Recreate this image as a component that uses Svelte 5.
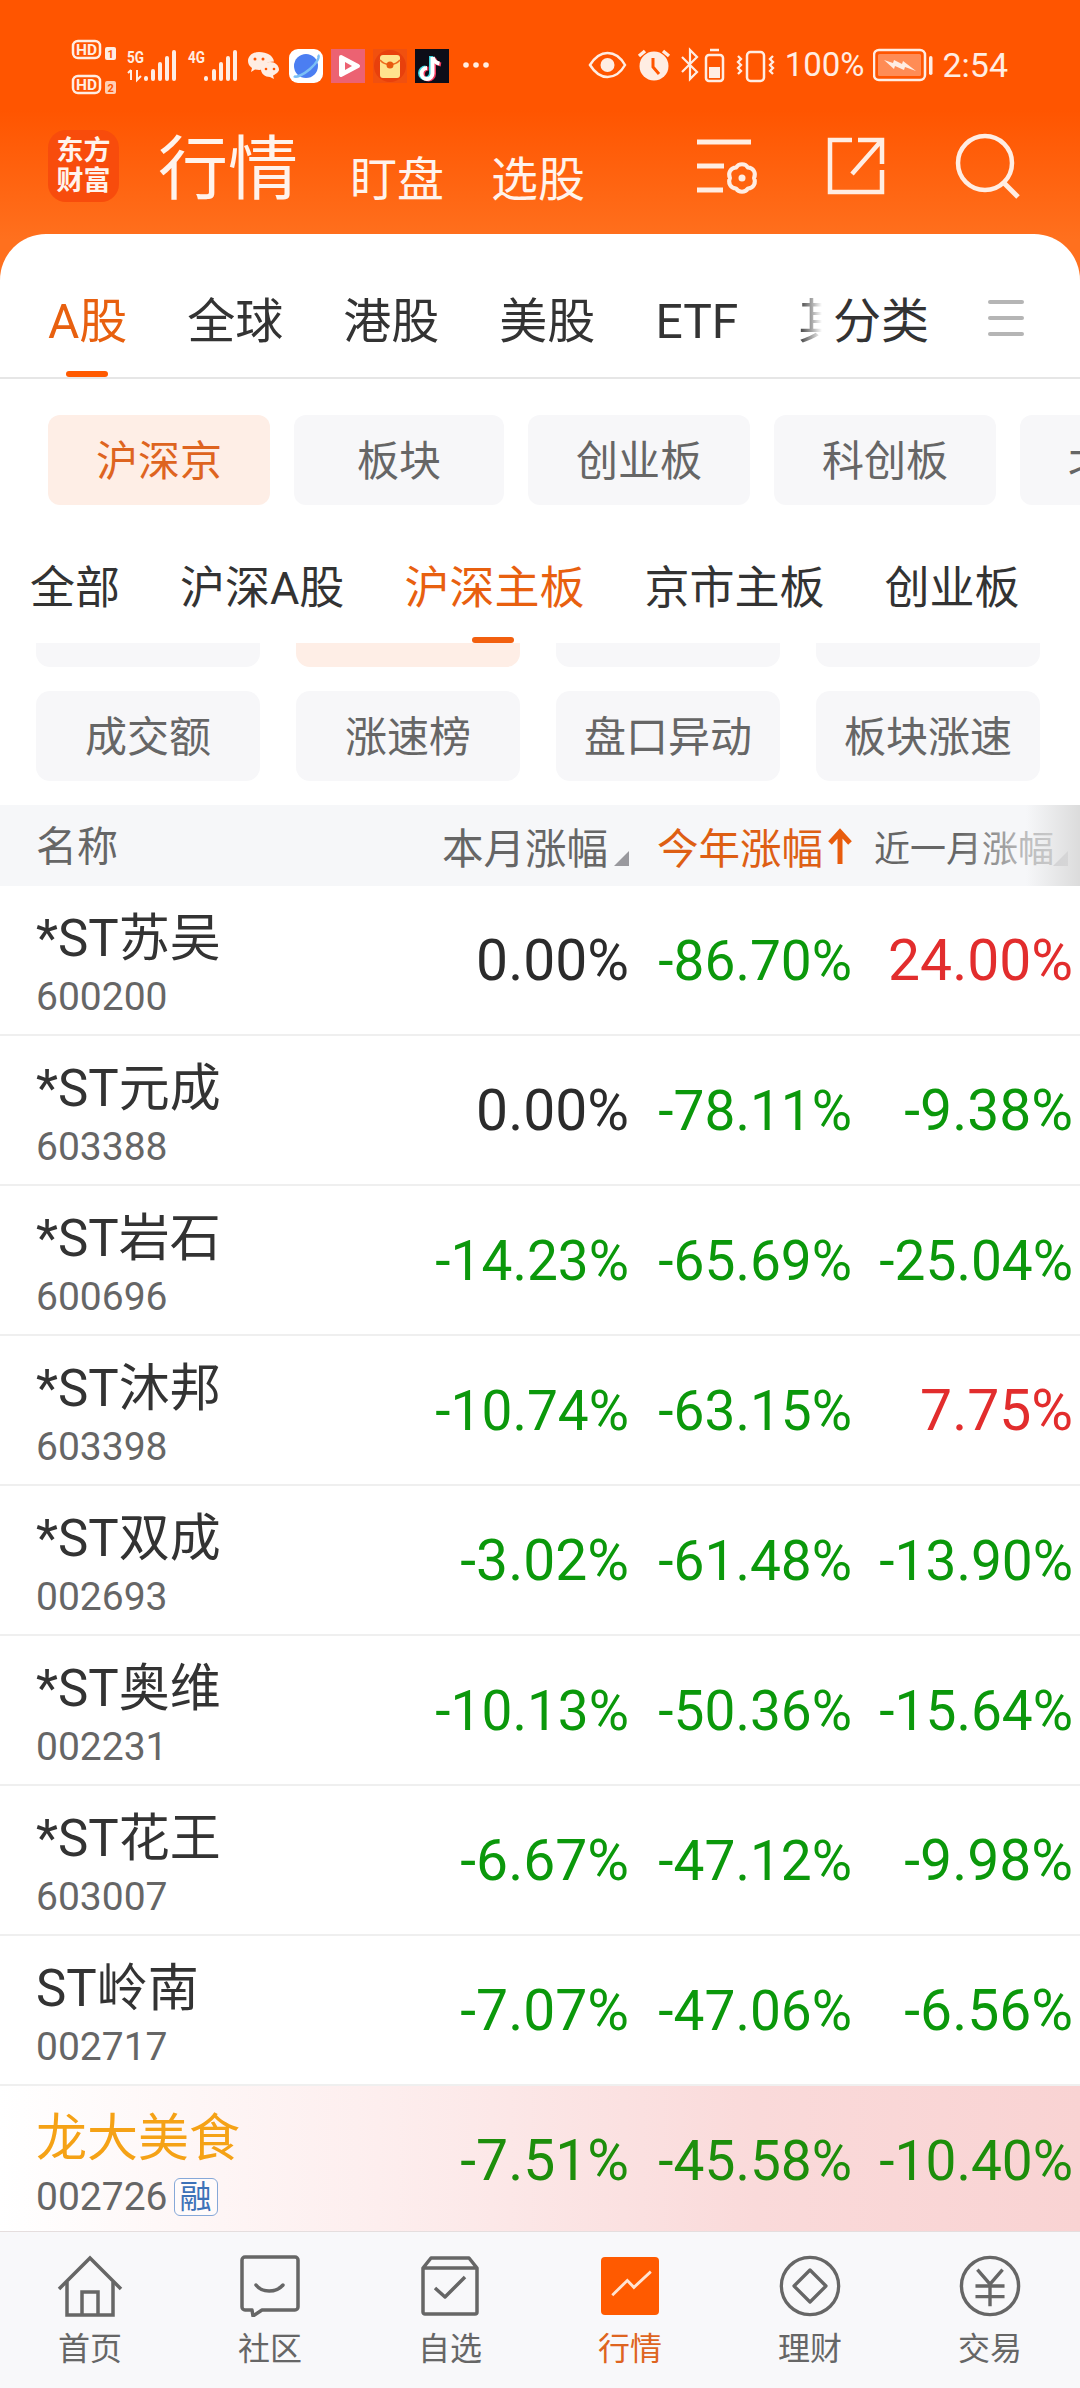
<script>
  const tabs = ['A股', '全球', '港股', '美股', 'ETF', '其他'];
  const chips = [['沪深京', true], ['板块'], ['创业板'], ['科创板'], ['北交所']];
  const subs = ['全部', '沪深A股', '沪深主板', '京市主板', '创业板'];
  const sorts = ['成交额', '涨速榜', '盘口异动', '板块涨速'];
  const rows = [
    ['*ST苏吴', '600200', '0.00%', '-86.70%', '24.00%'],
    ['*ST元成', '603388', '0.00%', '-78.11%', '-9.38%'],
    ['*ST岩石', '600696', '-14.23%', '-65.69%', '-25.04%'],
    ['*ST沐邦', '603398', '-10.74%', '-63.15%', '7.75%'],
    ['*ST双成', '002693', '-3.02%', '-61.48%', '-13.90%'],
    ['*ST奥维', '002231', '-10.13%', '-50.36%', '-15.64%'],
    ['*ST花王', '603007', '-6.67%', '-47.12%', '-9.98%'],
    ['ST岭南', '002717', '-7.07%', '-47.06%', '-6.56%']
  ];
  const tone = (v) => (v.startsWith('-') ? 'down' : v.startsWith('0.00') ? 'flat' : 'up');
</script>

{#snippet val(v, col, cls)}
  <span class="v {col} {cls}" class:long={v.length > 6}>{v}</span>
{/snippet}

<div class="app">
  <header class="top">
    <div class="status">
      <svg class="st-left" width="440" height="70" viewBox="60 30 440 70" fill="none">
        <g fill="#FFEDE3" font-family="Roboto" font-weight="700">
          <rect x="73" y="41" width="27" height="17" rx="5" fill="none" stroke="#FFEDE3" stroke-width="2.5"/>
          <text x="76" y="55" font-size="14" textLength="21" lengthAdjust="spacingAndGlyphs">HD</text>
          <rect x="105" y="47" width="11" height="13" rx="2"/>
          <text x="107.500" y="58" font-size="11" fill="#FF5500">1</text>
          <rect x="73" y="76" width="27" height="17" rx="5" fill="none" stroke="#FFEDE3" stroke-width="2.5"/>
          <text x="76" y="90" font-size="14" textLength="21" lengthAdjust="spacingAndGlyphs">HD</text>
          <rect x="105" y="81" width="11" height="13" rx="2" opacity=".8"/>
          <text x="107.500" y="92" font-size="11" fill="#FF5500">2</text>
          <text x="127" y="63" font-size="16" textLength="17" lengthAdjust="spacingAndGlyphs">5G</text>
          <text x="188" y="63" font-size="16" textLength="17" lengthAdjust="spacingAndGlyphs">4G</text>
        </g>
        <path d="M131 70v10M128 73l3-3M137 70v10l4-4" stroke="#FFEDE3" stroke-width="2"/>
        <g stroke="#FFEDE3" stroke-width="4" stroke-linecap="round">
          <path d="M146 78v1M153 71v8M160 64v15M167 58v21M174 52v27"/>
          <path d="M206 78v1M214 71v8M221 64v15M228 58v21M235 52v27"/>
        </g>
        <path d="M259 52c-6.500 0-11 4-11 9 0 3 1.500 5 4 7l-1 4 4-2.500c3 .5 6 .5 7 0 1-5 5-8 12-8-1-6-7-9.500-15-9.500z" fill="#FFEDE3"/>
        <path d="M270 62c-6 0-9 3.500-9 7.500s4 7.500 9 7.500l4 2-1-3.500c3-1.500 6-3.500 6-6 0-4-4-7.500-9-7.500z" fill="#FFEDE3"/>
        <g fill="#FF5500"><circle cx="255" cy="59" r="1.500"/><circle cx="263" cy="59" r="1.500"/><circle cx="266" cy="69" r="1.300"/><circle cx="274" cy="69" r="1.300"/></g>
        <rect x="289" y="49" width="34" height="34" rx="9" fill="#fff"/>
        <circle cx="306" cy="66" r="12" fill="#4B7EF2"/>
        <path d="M318 55c2 2-1 8-8 14s-14 9-16 7" stroke="#7CC0F5" stroke-width="2.500"/>
        <rect x="331" y="49" width="34" height="34" fill="#EC6272"/>
        <path d="M341 57l17 9-17 9z" fill="#fff" stroke="#fff" stroke-width="4" stroke-linejoin="round"/>
        <path d="M345 62l7 4-7 4z" fill="#EC6272"/>
        <rect x="373" y="49" width="34" height="34" fill="#F1500F"/>
        <circle cx="390" cy="66" r="16" fill="#E8400C"/>
        <rect x="380" y="55" width="20" height="23" rx="3" fill="#FFE28E"/>
        <path d="M380 60c5 6 15 6 20 0" stroke="#EE6A1E" stroke-width="1.500"/>
        <circle cx="390" cy="65" r="3.500" fill="#E8590F"/>
        <rect x="415" y="49" width="34" height="34" fill="#0D0D18"/>
        <g stroke-width="4" fill="none">
          <path d="M431 56v17a5.500 5.500 0 1 1-5.500-5.500" stroke="#3CD6DE"/>
          <path d="M431 57c1 3.500 4 6 7 6.500" stroke="#3CD6DE"/>
          <path d="M434 58v16a5.500 5.500 0 1 1-5.500-5.500" stroke="#F23A5E"/>
          <path d="M434 58c1 3.500 4 6 7 6.500" stroke="#F23A5E"/>
          <path d="M432.500 57v16.500a5.500 5.500 0 1 1-5.500-5.500" stroke="#fff"/>
          <path d="M432.500 57c1 3.500 4 6 7 6.500" stroke="#fff"/>
        </g>
        <g fill="#FFEDE3"><circle cx="466" cy="65" r="2.800"/><circle cx="476" cy="65" r="2.800"/><circle cx="486" cy="65" r="2.800"/></g>
      </svg>
      <div class="st-right">
        <svg width="188" height="36" viewBox="590 47 188 36" fill="none" stroke="#FFEDE3" stroke-width="2.500">
          <path d="M592 65c5-8 11-12 17.500-12s13 4 17.500 12c-4.500 8-11 12-17.500 12s-12.500-4-17.500-12z"/>
          <circle cx="609.500" cy="65" r="7" fill="#FFEDE3" stroke="none"/>
          <circle cx="656" cy="66" r="14.500" fill="#FFEDE3" stroke="none"/>
          <path d="M655 58v9l6 7" stroke="#FF5500" stroke-width="3"/>
          <path d="M641 56l6-5M671 56l-6-5" stroke-width="3.500"/>
          <path d="M684 57l15 15-7 7V50l7 7-15 15" stroke-width="2.200"/>
          <rect x="708" y="55" width="17" height="26" rx="3"/>
          <path d="M712 50h9" stroke-width="2.500"/>
          <rect x="711" y="67" width="11" height="11" fill="#FFEDE3" stroke="none"/>
          <rect x="749" y="52" width="17" height="29" rx="3.500"/>
          <path d="M740 56l3 3-3 3 3 3-3 3 3 3-3 3M775 56l-3 3 3 3-3 3 3 3-3 3 3 3" stroke-width="2.300"/>
        </svg>
        <span class="pct">100%</span>
        <svg width="60" height="34" viewBox="874 49 60 34" fill="none">
          <rect x="875" y="51" width="51" height="30" rx="5" stroke="#FFEDE3" stroke-width="2.500"/>
          <rect x="879" y="55" width="43" height="22" rx="1.500" fill="#FF8C55"/>
          <path d="M885 61l9 3 1-3 8 4 1-3 13 10-11-4-1 3-9-4-1 3z" fill="#FFEDE3"/>
          <rect x="930" y="57" width="3.500" height="19" rx="1.700" fill="#FFEDE3"/>
        </svg>
        <span class="time">2:54</span>
      </div>
    </div>
    <div class="title-row">
      <div class="logo"><span>东方</span><span>财富</span></div>
      <h1>行情</h1>
      <span class="title-link first">盯盘</span>
      <span class="title-link">选股</span>
      <svg class="head-icons" width="330" height="70" viewBox="695 132 330 70" fill="none" stroke="#FFEDE3" stroke-width="5">
        <path d="M699 142h54M699 166h27M699 190h26"/>
        <path d="M756 178a7 7 0 0 1-6 10.400a7 7 0 0 1-12 0a7 7 0 0 1-6-10.400a7 7 0 0 1 6-10.400a7 7 0 0 1 12 0a7 7 0 0 1 6 10.400z" stroke-width="4" stroke-linejoin="round"/>
        <circle cx="744" cy="178" r="3.500" fill="#FFEDE3" stroke="none"/>
        <path d="M854 140h-22v52h52v-22M860 140h24v24M884 140l-30 34" stroke-width="4.500"/>
        <circle cx="987" cy="163" r="27" stroke-width="4.500"/>
        <path d="M1006 183l14 14" stroke-width="5"/>
      </svg>
    </div>
  </header>

  <main class="card">
    <nav class="tabs">
      <div class="tab-scroll">
        {#each tabs as t, i}
          <span class="tab" class:on={i === 0}>{t}</span>
        {/each}
      </div>
      <span class="tab fixed">分类</span>
      <span class="burger"><i></i><i></i><i></i></span>
    </nav>

    <div class="chips">
      {#each chips as c, i}
        <span class="chip" class:on={c[1]} class:narrow={i === 1}>{c[0]}</span>
      {/each}
    </div>

    <div class="subs">
      {#each subs as s, i}
        <span class="sub" class:on={i === 2}>{s}</span>
      {/each}
    </div>

    <div class="sort-window">
      <div class="sort-grid">
        <span class="sort"></span><span class="sort on"></span><span class="sort"></span><span class="sort"></span>
        {#each sorts as s}<span class="sort">{s}</span>{/each}
      </div>
    </div>

    <div class="thead">
      <span class="th-name">名称</span>
      <span class="th c1">本月涨幅<b class="tri"></b></span>
      <span class="th c2 on">今年涨幅<svg width="24" height="36" viewBox="0 0 24 36" fill="none" stroke="#E85C0D" stroke-width="5"><path d="M12 36V4M2 15L12 4l10 11"/></svg></span>
      <span class="th c3">近一月涨幅<b class="tri"></b></span>
      <i class="fade"></i>
    </div>

    {#each rows as r}
      <div class="row">
        <div class="name"><div class="n">{r[0]}</div><div class="code">{r[1]}</div></div>
        {@render val(r[2], 'c1', tone(r[2]))}
        {@render val(r[3], 'c2', tone(r[3]))}
        {@render val(r[4], 'c3', tone(r[4]))}
      </div>
    {/each}
    <div class="row hot">
      <div class="name">
        <div class="n gold">龙大美食</div>
        <div class="code">002726<em class="rong">融</em></div>
      </div>
      {@render val('-7.51%', 'c1', 'down')}
      {@render val('-45.58%', 'c2', 'down')}
      {@render val('-10.40%', 'c3', 'down')}
    </div>
  </main>

  <footer class="bar">
    <div class="item">
      <svg width="66" height="62" viewBox="0 0 66 62" fill="none" stroke="#666" stroke-width="3.500"><path d="M2 34L33 3l31 31"/><path d="M10 27v33h46V27M25 60V37h16v23"/></svg>
      <span>首页</span>
    </div>
    <div class="item">
      <svg width="60" height="62" viewBox="0 0 60 62" fill="none" stroke="#666" stroke-width="3.500" stroke-linejoin="round"><path d="M5 2h50a3 3 0 0 1 3 3v47a3 3 0 0 1-3 3H22l-9 6-1-6H5a3 3 0 0 1-3-3V5a3 3 0 0 1 3-3z"/><path d="M16 30c6 8 20 8 27 0" stroke-linecap="round"/></svg>
      <span>社区</span>
    </div>
    <div class="item">
      <svg width="58" height="62" viewBox="0 0 58 62" fill="none" stroke="#666" stroke-width="3.500" stroke-linejoin="round"><path d="M2 13L10 3h38l8 10v44a2 2 0 0 1-2 2H4a2 2 0 0 1-2-2zM2 13h54"/><path d="M14 33l10 9 20-20"/></svg>
      <span>自选</span>
    </div>
    <div class="item active">
      <svg width="58" height="62" viewBox="0 0 58 62" fill="none"><rect y="2" width="58" height="58" rx="4" fill="#FF5A00"/><path d="M12 40l16-15 7 7 18-16" transform="translate(0 1) scale(.94 .98)" stroke="#FFE3D2" stroke-width="3"/></svg>
      <span>行情</span>
    </div>
    <div class="item">
      <svg width="66" height="66" viewBox="0 0 66 66" fill="none" stroke="#666" stroke-width="3.500" stroke-linejoin="round"><circle cx="33" cy="33" r="30.500"/><path d="M33 16l17 17-17 17-17-17z"/></svg>
      <span>理财</span>
    </div>
    <div class="item">
      <svg width="64" height="64" viewBox="0 0 64 64" fill="none" stroke="#666" stroke-width="3.500"><circle cx="32" cy="32" r="29.500"/><path d="M19 15l13 15 13-15M17 32h30M17 43h30M32 30v23"/></svg>
      <span>交易</span>
    </div>
  </footer>
</div>

<style>
  :global(body) { margin: 0; background: #fff; }
  .app {
    width: 1080px; height: 2388px; overflow: hidden; display: flex; flex-direction: column;
    font-family: Roboto, "Noto Sans CJK SC", sans-serif;
    background: linear-gradient(#FF5500 0, #FF5500 110px, #FF701E 240px, #FF701E 300px) no-repeat;
    background-size: 100% 300px;
  }
  .top { height: 234px; color: #FFF3EC; flex: none; }
  .status { height: 108px; display: flex; justify-content: space-between; box-sizing: border-box; padding-top: 17px; padding-left: 60px; }
  .st-left { margin-top: 13px; display: block; }
  .st-right { display: flex; align-items: center; height: 40px; margin-top: 28px; padding-right: 72px; }
  .pct { font-size: 33px; line-height: 40px; margin: 0 9px; color: #FFEDE3; }
  .time { font-size: 34px; line-height: 40px; margin-left: 9px; color: #FFEDE3; }
  .title-row { display: flex; position: relative; height: 126px; padding-left: 48px; box-sizing: border-box; }
  .logo {
    width: 71px; height: 72px; margin-top: 22px; border-radius: 18px; background: #F84C0C; color: #FFF3EC;
    display: flex; flex-direction: column; align-items: center; justify-content: center;
    font-size: 27px; line-height: 30px; font-weight: 700;
  }
  h1 { margin: 17px 0 0 39px; font-size: 70px; line-height: 90px; font-weight: 400; }
  .title-link { font-size: 47px; line-height: 60px; margin: 42px 0 0 47px; }
  .title-link.first { margin-left: 52px; }
  .head-icons { margin: 24px 0 0 108px; display: block; }
  .card { flex: 1; background: #fff; border-radius: 46px 46px 0 0; overflow: hidden; }
  .tabs { height: 145px; box-sizing: border-box; border-bottom: 2px solid #E6E6E6; display: flex; padding-left: 48px; position: relative; }
  .tab-scroll {
    display: flex; gap: 60px; width: 774px; overflow: hidden; flex: none;
    -webkit-mask-image: linear-gradient(to right, #000 750px, transparent 774px);
    mask-image: linear-gradient(to right, #000 750px, transparent 774px);
  }
  .tab { font-size: 48px; line-height: 60px; padding-top: 58px; color: #333; flex: none; position: relative; height: 85px; white-space: nowrap; }
  .tab.on { color: #E8600F; }
  .tab.on::after { content: ""; position: absolute; left: 18px; bottom: 0; width: 42px; height: 6px; border-radius: 3px; background: #FF5A00; }
  .tab.fixed { margin-left: 11px; }
  .burger { display: flex; flex-direction: column; gap: 12px; margin: 66px 0 0 59px; width: 36px; }
  .burger i { display: block; height: 4px; border-radius: 2px; background: #B5B5B5; }
  .chips { display: flex; gap: 24px; padding: 36px 0 0 48px; height: 90px; overflow: hidden; }
  .chip { flex: none; width: 222px; height: 90px; border-radius: 12px; background: #F7F7F9; color: #666; font-size: 42px; line-height: 94px; text-align: center; }
  .chip.narrow { width: 210px; }
  .chip.on { background: #FEEEE6; color: #DE6420; }
  .subs { display: flex; gap: 60px; padding: 54px 0 0 30px; height: 84px; box-sizing: content-box; white-space: nowrap; }
  .sub { position: relative; font-size: 45px; line-height: 60px; height: 84px; color: #333; flex: none; }
  .sub.on { color: #E8600F; }
  .sub.on::after { content: ""; position: absolute; left: 68px; bottom: 0; width: 42px; height: 6px; border-radius: 3px; background: #F25F0E; z-index: 2; }
  .sort-window { height: 162px; overflow: hidden; }
  .sort-grid { display: grid; grid-template-columns: repeat(4, 224px); gap: 24px 36px; padding-left: 36px; margin-top: -66px; }
  .sort { height: 90px; border-radius: 14px; background: #F7F7F9; color: #666; font-size: 42px; line-height: 94px; text-align: center; }
  .sort.on { background: #FEEEE6; }
  .thead { height: 81px; background: #F6F7F9; display: flex; align-items: center; position: relative; }
  .th-name { width: 410px; padding-left: 36px; box-sizing: border-box; font-size: 41px; color: #666; flex: none; margin-top: -6px; }
  .th { display: flex; align-items: center; justify-content: flex-end; font-size: 41.500px; color: #666; position: relative; white-space: nowrap; height: 81px; flex: none; }
  .th.c1 { width: 219px; padding-right: 21px; box-sizing: border-box; }
  .th.c2 { width: 223px; padding-right: 0; box-sizing: border-box; color: #DE5F14; justify-content: flex-end; gap: 5px; }
  .th.c3 { width: 222px; padding-right: 20px; box-sizing: border-box; font-size: 36px; }
  .tri { position: absolute; right: 0; bottom: 20px; width: 0; height: 0; border-style: solid; border-width: 0 0 15px 15px; border-color: transparent transparent #99999E transparent; }
  .th.c3 .tri { right: 6px; }
  .fade { position: absolute; right: 0; top: 0; bottom: 0; width: 120px; background: linear-gradient(to right, rgba(246,247,249,0), rgba(246,247,249,.6) 55%, rgba(218,218,218,.95)); }
  .row { height: 150px; box-sizing: border-box; border-bottom: 2px solid #EFEFEF; display: flex; position: relative; }
  .row.hot { height: 147px; border-bottom: 2px solid #E5DEDE; background: linear-gradient(to right, #fff, #FDEEEE 35%, #FADADA 70%, #F9D3D3); }
  .name { width: 410px; flex: none; box-sizing: border-box; padding: 19px 0 0 36px; }
  .n { font-size: 51px; line-height: 68px; color: #333; }
  .n.gold { color: #F5A216; }
  .code { font-size: 39px; line-height: 46px; color: #666; margin-top: 1px; display: flex; align-items: center; }
  .rong { font-style: normal; font-size: 32px; line-height: 36px; width: 42px; text-align: center; color: #3D72B8; border: 1.500px solid #86A8D8; border-radius: 6px; margin-left: 6px; box-sizing: content-box; height: 36px; background: #fff8; }
  .v { font-size: 57px; line-height: 150px; text-align: right; flex: none; white-space: nowrap; }
  .v.long { font-size: 55px; }
  .v.c1 { width: 219px; }
  .v.c2 { width: 223px; }
  .v.c3 { width: 221px; }
  .flat { color: #2B2B2B; }
  .down { color: #0B980B; }
  .up { color: #E22D2D; }
  .hot .down { color: #1D8E0B; }
  .bar { height: 156px; flex: none; background: #F8F8FA; display: grid; grid-template-columns: repeat(6, 180px); }
  .item { display: flex; flex-direction: column; align-items: center; font-size: 32px; color: #666; position: relative; padding-top: 23px; box-sizing: border-box; }
  .item svg { height: 62px; display: block; }
  .item span { line-height: 42px; margin-top: 11px; }
  .item.active span { color: #DE6420; }
</style>
